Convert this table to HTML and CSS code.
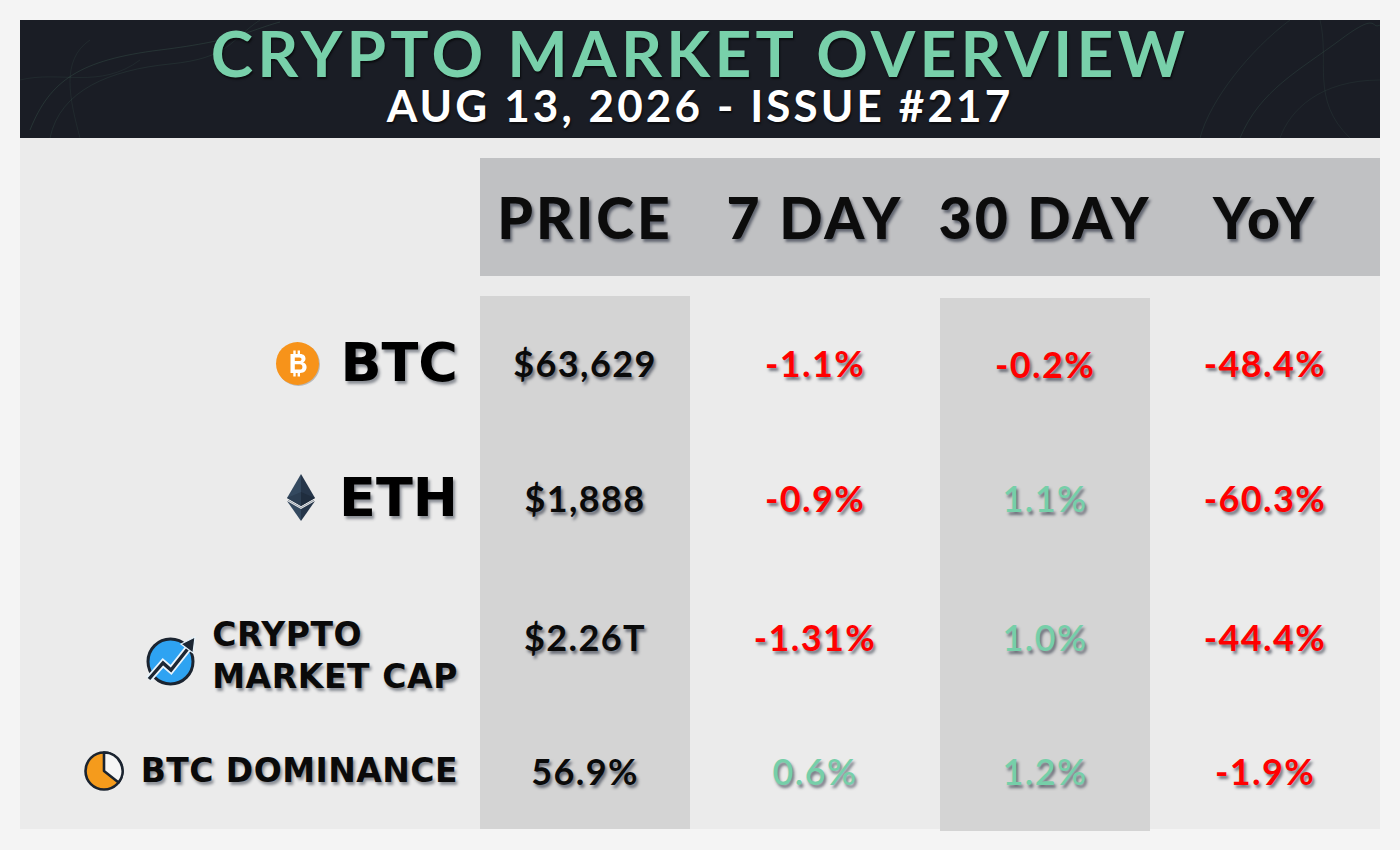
FILE: index.html
```html
<!DOCTYPE html>
<html lang="en">
<head>
<meta charset="utf-8">
<title>Crypto Market Overview</title>
<link rel="stylesheet" href="styles.css">
</head>
<body>
<div class="card">
  <header class="hero">
    <svg class="smoke" width="1360" height="118" viewBox="0 0 1360 118" aria-hidden="true">
      <g fill="none" stroke="#6fbf97" stroke-width="1">
        <path d="M10 110 C 30 60, 60 40, 140 30 S 230 10, 260 2" opacity=".14"/>
        <path d="M30 118 C 40 70, 90 50, 150 44 S 210 20, 240 0" opacity=".1"/>
        <path d="M60 118 C 50 80, 40 40, 70 20" opacity=".08"/>
        <path d="M0 60 C 40 50, 80 70, 120 40" opacity=".08"/>
        <path d="M1180 118 C 1190 80, 1230 30, 1270 0" opacity=".1"/>
        <path d="M1220 118 C 1240 70, 1280 50, 1320 20 S 1350 10, 1360 5" opacity=".12"/>
        <path d="M1260 118 C 1270 90, 1300 60, 1360 60" opacity=".08"/>
        <path d="M1300 0 C 1310 40, 1290 80, 1330 118" opacity=".08"/>
      </g>
    </svg>
    <h1 class="title">CRYPTO MARKET OVERVIEW</h1>
    <p class="subtitle">AUG 13, 2026 - ISSUE #217</p>
  </header>

  <section class="board">
    <div class="head-row">
      <div class="col-label"></div>
      <div class="band">
        <div class="hcell c-price">PRICE</div>
        <div class="hcell c-d7">7 DAY</div>
        <div class="hcell c-d30">30 DAY</div>
        <div class="hcell c-yoy">YoY</div>
      </div>
    </div>

    <div class="grid">
      <div class="col col-label">
        <div class="cell r1 lab">
          <svg class="ico" width="45" height="45" viewBox="0 0 45 45" aria-hidden="true">
            <circle cx="23.5" cy="23.5" r="21.5" fill="#7a7a7a" opacity=".45"/>
            <circle cx="22.5" cy="22.5" r="21.5" fill="#f7931a"/>
            <g fill="#fff">
              <path fill-rule="evenodd" d="M15.5 13 H25 C29 13 30.5 15.2 30.5 17.7 C30.5 19.6 29.4 20.9 27.9 21.4 C30.1 21.9 31.6 23.5 31.6 26 C31.6 29.2 29.5 32 25.2 32 H15.5 Z M19.8 16.4 V20.1 H24.4 C25.7 20.1 26.5 19.3 26.5 18.2 C26.5 17.1 25.7 16.4 24.4 16.4 Z M19.8 23.3 V28.6 H25 C26.5 28.6 27.4 27.6 27.4 25.9 C27.4 24.3 26.5 23.3 25 23.3 Z"/>
              <rect x="18.3" y="9.5" width="2.4" height="4.5"/>
              <rect x="22.6" y="9.5" width="2.4" height="4.5"/>
              <rect x="18.3" y="31" width="2.4" height="4.5"/>
              <rect x="22.6" y="31" width="2.4" height="4.5"/>
            </g>
          </svg>
          <span class="coin">BTC</span>
        </div>
        <div class="cell r2 lab eth">
          <svg class="ico" width="28" height="47" viewBox="0 0 28 47" aria-hidden="true">
            <polygon points="14,0 0,24 14,32" fill="#34495f"/>
            <polygon points="14,0 28,24 14,32" fill="#26364a"/>
            <polygon points="0,24 14,18 14,32" fill="#2c3e52"/>
            <polygon points="28,24 14,18 14,32" fill="#1f2d3e"/>
            <polygon points="0,27 14,35 14,47" fill="#34495f"/>
            <polygon points="28,27 14,35 14,47" fill="#26364a"/>
            <polyline points="1,26.2 14,33.6 27,26.2" fill="none" stroke="#9aa3ad" stroke-width="1"/>
          </svg>
          <span class="coin">ETH</span>
        </div>
        <div class="cell r3 lab mcap">
          <svg class="ico" width="52" height="54" viewBox="0 0 52 54" aria-hidden="true">
            <circle cx="25.5" cy="29.5" r="22.5" fill="#2ea3f2" stroke="#1b2430" stroke-width="3"/>
            <polyline points="4,47 18,31 26,38 45,14" fill="none" stroke="#e8f4fc" stroke-width="7" stroke-linejoin="miter"/>
            <polyline points="4,47 18,31 26,38 45,14" fill="none" stroke="#1d2733" stroke-width="3.4" stroke-linejoin="miter"/>
            <polygon points="50,5 48,21 36,12" fill="#1d2733" stroke="#e8f4fc" stroke-width="1.2"/>
          </svg>
          <span class="small-lab">CRYPTO<br>MARKET CAP</span>
        </div>
        <div class="cell r4 lab dom">
          <svg class="ico" width="42" height="42" viewBox="0 0 42 42" aria-hidden="true">
            <circle cx="21" cy="21" r="18.5" fill="#f59b1c" stroke="#1b2430" stroke-width="2.6"/>
            <path d="M21 21 L21 2.5 A18.5 18.5 0 0 1 35.6 32.4 Z" fill="#f6f6f6" stroke="#1b2430" stroke-width="2.6" stroke-linejoin="round"/>
          </svg>
          <span class="small-lab">BTC DOMINANCE</span>
        </div>
      </div>

      <div class="col c-price shade">
        <div class="cell r1 val">$63,629</div>
        <div class="cell r2 val">$1,888</div>
        <div class="cell r3 val">$2.26T</div>
        <div class="cell r4 val">56.9%</div>
      </div>

      <div class="col c-d7">
        <div class="cell r1 val neg">-1.1%</div>
        <div class="cell r2 val neg">-0.9%</div>
        <div class="cell r3 val neg">-1.31%</div>
        <div class="cell r4 val pos">0.6%</div>
      </div>

      <div class="col c-d30 shade shade-30">
        <div class="cell r1 val neg">-0.2%</div>
        <div class="cell r2 val pos">1.1%</div>
        <div class="cell r3 val pos">1.0%</div>
        <div class="cell r4 val pos">1.2%</div>
      </div>

      <div class="col c-yoy">
        <div class="cell r1 val neg">-48.4%</div>
        <div class="cell r2 val neg">-60.3%</div>
        <div class="cell r3 val neg">-44.4%</div>
        <div class="cell r4 val neg">-1.9%</div>
      </div>
    </div>
  </section>
</div>
</body>
</html>
```

FILE: styles.css
```css
* { box-sizing: border-box; }

html, body {
  margin: 0;
  padding: 0;
  background: #f4f4f4;
}

body {
  width: 1400px;
  height: 850px;
  padding: 20px;
  font-family: "Lato", "Liberation Sans", sans-serif;
  overflow: hidden;
}

.card {
  width: 1360px;
  height: 809px;
  background: #ebebeb;
  display: flex;
  flex-direction: column;
}

/* ---------- header ---------- */
.hero {
  position: relative;
  flex: none;
  height: 118px;
  background: #1a1d25;
  display: flex;
  flex-direction: column;
  align-items: center;
}

.smoke {
  position: absolute;
  left: 0;
  top: 0;
}

.title {
  position: relative;
  margin: 2px 0 0;
  font-size: 64px;
  line-height: 62px;
  font-weight: 700;
  letter-spacing: 4.3px;
  color: #78d0aa;
  white-space: nowrap;
  text-shadow: 1px 2px 2px rgba(0, 0, 0, 0.6);
}

.subtitle {
  position: relative;
  margin: 1px 0 0;
  font-size: 44px;
  line-height: 40px;
  font-weight: 700;
  letter-spacing: 3.1px;
  color: #ffffff;
  white-space: nowrap;
  text-shadow: 1px 2px 2px rgba(0, 0, 0, 0.6);
}

/* ---------- board ---------- */
.board {
  padding-top: 20px;
  display: flex;
  flex-direction: column;
  gap: 20px;
}

.head-row {
  display: flex;
  height: 118px;
}

.col-label { width: 460px; flex: none; }
.c-price { width: 210px; flex: none; }
.c-d7 { width: 250px; flex: none; }
.c-d30 { width: 210px; flex: none; }
.c-yoy { width: 230px; flex: none; }

.band {
  display: flex;
  background: #c0c1c3;
}

.hcell {
  display: flex;
  align-items: center;
  justify-content: center;
  white-space: nowrap;
  font-size: 57px;
  font-weight: 900;
  letter-spacing: 3px;
  color: #0c0c0c;
  text-shadow: 2px 3px 3px rgba(20, 28, 45, 0.55);
}

.grid {
  display: flex;
  height: 533px;
}

.col {
  display: flex;
  flex-direction: column;
}

.shade { background: #d4d4d4; }
.shade-30 {
  margin-top: 2px;
  margin-bottom: -2px;
}
.shade-30 .r1 { height: 132px; }

.cell {
  display: flex;
  align-items: center;
  justify-content: center;
  white-space: nowrap;
}

.r1 { height: 134px; }
.r2 { height: 135px; }
.r3 { height: 148px; align-items: flex-start; }
.r4 { height: 116px; }

.lab {
  justify-content: flex-end;
  padding-right: 22px;
  gap: 20px;
}
.eth { gap: 24px; }
.mcap { gap: 15px; padding-top: 49px; align-items: flex-start; }
.mcap .ico { margin-top: 18px; }
.dom { gap: 16px; }
.dom .small-lab { letter-spacing: 0.45px; }

.ico { display: block; flex: none; }

.coin {
  font-family: "DejaVu Sans", "Lato", sans-serif;
  font-weight: 700;
  font-size: 54px;
  line-height: 60px;
  color: #000;
  letter-spacing: 0px;
  text-shadow: 2px 3px 3px rgba(20, 28, 45, 0.45);
}

.small-lab {
  font-family: "DejaVu Sans", "Lato", sans-serif;
  font-weight: 700;
  font-size: 33px;
  line-height: 42px;
  letter-spacing: 0.6px;
  color: #0a0a0a;
  text-align: left;
  text-shadow: 2px 3px 3px rgba(20, 28, 45, 0.45);
}

.val {
  font-size: 36px;
  font-weight: 700;
  color: #0a0a0a;
  letter-spacing: 1.4px;
  text-shadow: 2px 3px 3px rgba(20, 28, 45, 0.55);
}

.r3.val {
  padding-top: 51px;
  line-height: 42px;
}

.neg { color: #ff0000; }
.pos { color: #76cfa9; font-weight: 600; }
```
